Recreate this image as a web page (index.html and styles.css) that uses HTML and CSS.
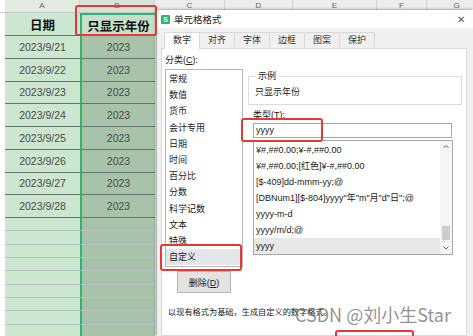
FILE: index.html
```html
<!DOCTYPE html>
<html>
<head>
    <meta charset="utf-8">
    <title>单元格格式</title>
    <link rel="stylesheet" href="styles.css">
</head>
<body>
    <div class="screen">
        <div class="sheet">
            <div class="col-heads">
                <span class="stub"></span>
                <span class="ch ch-a">A</span>
                <span class="ch ch-b">B</span>
                <span class="ch ch-c">C</span>
                <span class="ch ch-d">D</span>
                <span class="ch ch-e">E</span>
                <span class="ch ch-f">F</span>
                <span class="ch ch-g">G</span>
            </div>
            <div class="row head-row">
                <span class="stub"></span>
                <span class="cell a">日期</span>
                <span class="cell b">只显示年份</span>
            </div>
            <div class="row"><span class="stub"></span><span class="cell a">2023/9/21</span><span class="cell b">2023</span></div>
            <div class="row"><span class="stub"></span><span class="cell a">2023/9/22</span><span class="cell b">2023</span></div>
            <div class="row"><span class="stub"></span><span class="cell a">2023/9/23</span><span class="cell b">2023</span></div>
            <div class="row"><span class="stub"></span><span class="cell a">2023/9/24</span><span class="cell b">2023</span></div>
            <div class="row"><span class="stub"></span><span class="cell a">2023/9/25</span><span class="cell b">2023</span></div>
            <div class="row"><span class="stub"></span><span class="cell a">2023/9/26</span><span class="cell b">2023</span></div>
            <div class="row"><span class="stub"></span><span class="cell a">2023/9/27</span><span class="cell b">2023</span></div>
            <div class="row"><span class="stub"></span><span class="cell a">2023/9/28</span><span class="cell b">2023</span></div>
            <div class="row empty"><span class="stub"></span><span class="cell a"></span><span class="cell b"></span></div>
            <div class="row empty"><span class="stub"></span><span class="cell a"></span><span class="cell b"></span></div>
            <div class="row empty"><span class="stub"></span><span class="cell a"></span><span class="cell b"></span></div>
            <div class="row empty"><span class="stub"></span><span class="cell a"></span><span class="cell b"></span></div>
            <div class="row empty"><span class="stub"></span><span class="cell a"></span><span class="cell b"></span></div>
            <div class="row empty"><span class="stub"></span><span class="cell a"></span><span class="cell b"></span></div>
            <div class="row empty"><span class="stub"></span><span class="cell a"></span><span class="cell b"></span></div>
            <div class="row empty"><span class="stub"></span><span class="cell a"></span><span class="cell b"></span></div>
            <div class="row empty"><span class="stub"></span><span class="cell a"></span><span class="cell b"></span></div>
        </div>

        <div class="dialog">
            <div class="title">
                <span class="logo">S</span>
                <span class="title-text">单元格格式</span>
                <span class="close">✕</span>
            </div>
            <div class="body">
                <div class="tabs">
                    <span class="tab active">数字</span>
                    <span class="tab">对齐</span>
                    <span class="tab">字体</span>
                    <span class="tab">边框</span>
                    <span class="tab">图案</span>
                    <span class="tab">保护</span>
                </div>
                <div class="panel">
                    <div class="cat-label">分类(<u>C</u>):</div>
                    <div class="columns">
                        <div class="left">
                            <ul class="listbox">
                                <li>常规</li>
                                <li>数值</li>
                                <li>货币</li>
                                <li>会计专用</li>
                                <li>日期</li>
                                <li>时间</li>
                                <li>百分比</li>
                                <li>分数</li>
                                <li>科学记数</li>
                                <li>文本</li>
                                <li>特殊</li>
                                <li class="sel">自定义</li>
                            </ul>
                            <button class="del">删除(<u>D</u>)</button>
                        </div>
                        <div class="right">
                            <fieldset class="sample">
                                <legend>示例</legend>
                                <div class="sample-text">只显示年份</div>
                            </fieldset>
                            <div class="type-label">类型(<u>T</u>):</div>
                            <div class="type-input">yyyy</div>
                            <div class="formats">
                                <ul class="fmt-list">
                                    <li>¥#,##0.00;¥-#,##0.00</li>
                                    <li>¥#,##0.00;[红色]¥-#,##0.00</li>
                                    <li>[$-409]dd-mmm-yy;@</li>
                                    <li>[DBNum1][$-804]yyyy"年"m"月"d"日";@</li>
                                    <li>yyyy-m-d</li>
                                    <li>yyyy/m/d;@</li>
                                    <li class="sel">yyyy</li>
                                </ul>
                                <div class="scroll">
                                    <svg class="arrow" width="12" height="12" viewBox="0 0 12 12"><path d="M3.5 7 L6 4.5 L8.5 7" fill="none" stroke="#606060" stroke-width="1"/></svg>
                                    <div class="track"></div>
                                    <div class="thumb"></div>
                                    <svg class="arrow" width="12" height="13" viewBox="0 0 12 13"><path d="M3.5 5.5 L6 8 L8.5 5.5" fill="none" stroke="#606060" stroke-width="1"/></svg>
                                </div>
                            </div>
                        </div>
                    </div>
                    <div class="desc">以现有格式为基础，生成自定义的数字格式。</div>
                </div>
            </div>
        </div>

        <div class="mark mark-head"></div>
        <div class="mark mark-type"></div>
        <div class="mark mark-custom"></div>
        <div class="mark mark-ok"></div>
        <div class="watermark">CSDN @刘小生Star</div>
    </div>
</body>
</html>
```

FILE: styles.css
```css
:root {
    --cell-a: #cde6cf;
    --cell-b: #a9c3aa;
    --row-line: #62776a;
    --select: #2fb56f;
    --mark: #e53935;
}

* {
    box-sizing: border-box;
    margin: 0;
    padding: 0;
}

body {
    width: 473px;
    height: 336px;
    overflow: hidden;
    background: #fff;
    font-family: "Liberation Sans", "Noto Sans CJK SC", sans-serif;
}

.screen {
    position: relative;
    width: 473px;
    height: 336px;
    overflow: hidden;
}

/* 表格部分 */
.col-heads {
    display: flex;
    height: 13px;
    background: #ededed;
    border-bottom: 1px solid #c4c4c4;
    font-size: 8px;
    color: #666;
}

.col-heads .stub {
    background: #fff;
}

.ch {
    flex: none;
    text-align: center;
    line-height: 11px;
    border-right: 1px solid #d2d2d2;
}

.ch-a { width: 75px; background: #e2ebe2; }
.ch-b { width: 75px; background: #d6e5d7; }
.ch-c { width: 70px; }
.ch-d { width: 68px; }
.ch-e { width: 84px; }
.ch-f { width: 50px; }
.ch-g { width: 60px; }

.row {
    display: flex;
    height: 22.75px;
}

.head-row {
    height: 23px;
}

.stub {
    width: 5px;
    flex: none;
    background: #fff;
}

.cell {
    width: 75px;
    flex: none;
    display: flex;
    align-items: center;
    justify-content: center;
    border-bottom: 1px solid var(--row-line);
    font-size: 10.5px;
    color: #4a4a4a;
}

.cell.a {
    background: var(--cell-a);
}

.cell.b {
    background: var(--cell-b);
    border-left: 2px solid var(--select);
}

.head-row .cell {
    font-size: 12.5px;
    font-weight: bold;
    color: #111;
}

.head-row .cell.b {
    background: #c6dfc8;
    border-top: 2px solid var(--select);
}

.row.empty {
    height: 13.35px;
}

.row.empty .cell {
    border-bottom-color: #b9c6cc;
}

/* 对话框 */
.dialog {
    position: absolute;
    left: 157px;
    top: 10px;
    width: 316px;
    height: 326px;
    display: flex;
    flex-direction: column;
    background: #f0f0f0;
    box-shadow: -1px 0 3px rgba(0, 0, 0, 0.5);
    font-size: 9px;
    color: #222;
}

.title {
    height: 18px;
    display: flex;
    align-items: center;
    padding: 0 8px 0 4px;
    background: #fff;
}

.logo {
    width: 9px;
    height: 9px;
    background: #2bb673;
    color: #fff;
    font-size: 7px;
    line-height: 9px;
    text-align: center;
    font-weight: bold;
    border-radius: 1px;
}

.title-text {
    margin-left: 4px;
    font-size: 9.5px;
}

.close {
    margin-left: auto;
    font-size: 10px;
    color: #555;
}

.body {
    flex: 1;
    display: flex;
    flex-direction: column;
    padding: 4px 6px 0 4px;
}

.tabs {
    display: flex;
    height: 17px;
    margin: 0 0 -1px 3px;
    position: relative;
    z-index: 1;
}

.tab {
    padding: 0 8px;
    line-height: 15px;
    border: 1px solid #dadada;
    margin-right: -1px;
    color: #333;
}

.tab.active {
    background: #fff;
    border-bottom-color: #fff;
}

.panel {
    flex: 1;
    background: #fff;
    border: 1px solid #d9d9d9;
    padding: 0 4px 0 3px;
}

u {
    text-decoration: underline;
}

.cat-label {
    line-height: 11px;
    margin: 6px 0 3px;
}

.columns {
    display: flex;
}

.left {
    width: 78px;
    flex: none;
    display: flex;
    flex-direction: column;
}

ul {
    list-style: none;
}

.listbox {
    height: 198px;
    border: 1px solid #b4b4b4;
    padding-top: 1px;
}

.listbox li {
    height: 16.2px;
    line-height: 16.2px;
    padding-left: 3px;
}

.listbox .sel {
    background: #e5e6ea;
}

.del {
    margin: 4px 0 0 12px;
    width: 54px;
    height: 22px;
    background: #e3e3e3;
    border: 1px solid #b5b5b5;
    font-family: inherit;
    font-size: 9px;
    color: #222;
}

.right {
    margin-left: 5px;
    width: 214px;
    flex: none;
}

.sample {
    margin-top: 1.5px;
    padding: 5px 6px 6px;
    border: 1px solid #dcdcdc;
}

.sample legend {
    padding: 0 2px;
    margin-left: 1px;
    line-height: 11px;
}

.sample-text {
    line-height: 11px;
}

.type-label {
    margin: 5.5px 0 0 5px;
    line-height: 11px;
}

.type-input {
    margin: 1.5px 0 0 5px;
    width: 199px;
    height: 15px;
    border: 1px solid #a8a8a8;
    padding-left: 2px;
    line-height: 13px;
}

.formats {
    margin: 2px 0 0 5px;
    width: 200px;
    height: 115px;
    border: 1px solid #a8a8a8;
    display: flex;
}

.fmt-list {
    flex: 1;
    padding-top: 1px;
}

.fmt-list li {
    height: 16px;
    line-height: 16px;
    padding-left: 2px;
    white-space: nowrap;
    overflow: hidden;
}

.fmt-list .sel {
    background: #e8e8e8;
}

.scroll {
    width: 12px;
    flex: none;
    display: flex;
    flex-direction: column;
    background: #f5f5f5;
}

.arrow {
    flex: none;
    display: block;
}

.track {
    flex: 1;
}

.thumb {
    height: 14px;
    margin: 0 2px 1px;
    background: #cdcdcd;
}

.desc {
    margin-top: 13.5px;
    line-height: 11px;
    padding-left: 3px;
    font-size: 8.2px;
}

/* 红色标注框 */
.mark {
    position: absolute;
    border: 2px solid var(--mark);
    border-radius: 3px;
}

.mark-head { left: 75px; top: 5px; width: 82px; height: 31px; }
.mark-type { left: 241px; top: 118px; width: 82px; height: 24px; }
.mark-custom { left: 160px; top: 244px; width: 82px; height: 27px; }
.mark-ok { left: 335px; top: 330px; width: 79px; height: 14px; }

.watermark {
    position: absolute;
    left: 295px;
    top: 302px;
    font-family: "Noto Sans CJK SC", sans-serif;
    font-size: 18px;
    line-height: 24px;
    color: rgba(110, 110, 110, 0.75);
    white-space: nowrap;
}
```
